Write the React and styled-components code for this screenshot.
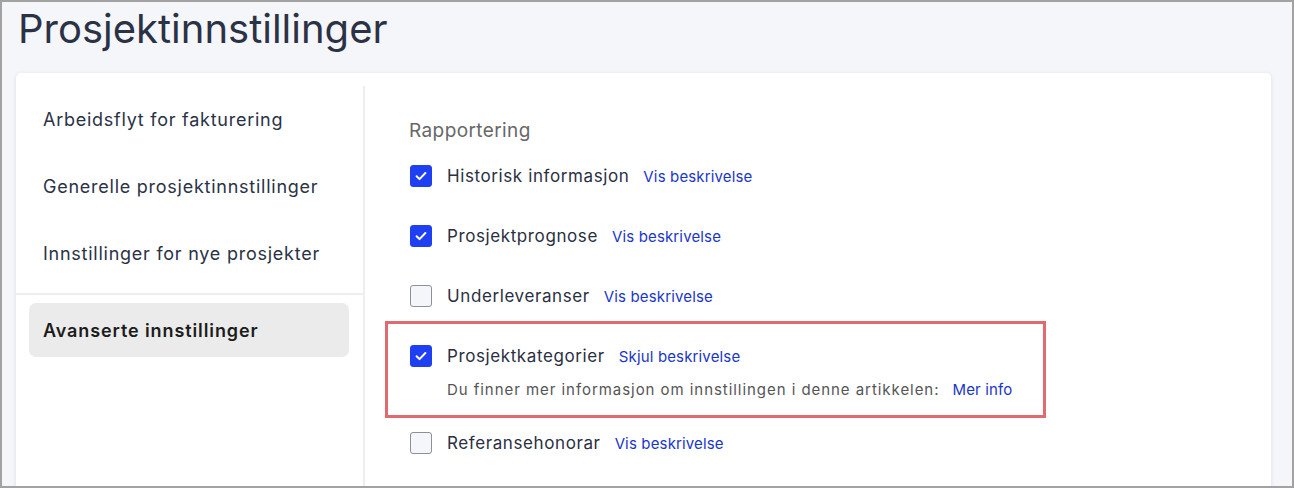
import React from "react";
import styled, { createGlobalStyle } from "styled-components";

const GlobalStyle = createGlobalStyle`
  html, body {
    margin: 0;
    padding: 0;
  }

  body {
    font-family: Inter, "Noto Sans", Roboto, sans-serif;
    background: #ffffff;
  }
`;

const navItems = [
  { label: "Arbeidsflyt for fakturering" },
  { label: "Generelle prosjektinnstillinger" },
  { label: "Innstillinger for nye prosjekter", divider: true },
  { label: "Avanserte innstillinger", active: true },
];

const settings = [
  { label: "Historisk informasjon", checked: true, link: "Vis beskrivelse" },
  { label: "Prosjektprognose", checked: true, link: "Vis beskrivelse" },
  { label: "Underleveranser", checked: false, link: "Vis beskrivelse" },
  {
    label: "Prosjektkategorier",
    checked: true,
    link: "Skjul beskrivelse",
    highlighted: true,
    description: "Du finner mer informasjon om innstillingen i denne artikkelen:",
  },
  { label: "Referansehonorar", checked: false, link: "Vis beskrivelse" },
];

const Checkbox = ({ checked }) => (
  <Box $checked={checked}>
    {checked && (
      <svg width="14" height="14" viewBox="0 0 14 14" fill="none">
        <path
          d="M2.6 7.3l2.9 2.8 5.9-6.1"
          stroke="#ffffff"
          strokeWidth="2"
          strokeLinecap="round"
          strokeLinejoin="round"
        />
      </svg>
    )}
  </Box>
);

const Setting = ({ setting }) => {
  const row = (
    <Row>
      <Checkbox checked={setting.checked} />
      <Label>{setting.label}</Label>
      <TextLink>{setting.link}</TextLink>
    </Row>
  );

  if (!setting.highlighted) return row;

  return (
    <Highlight>
      {row}
      <Description>
        {setting.description}
        <TextLink>Mer info</TextLink>
      </Description>
    </Highlight>
  );
};

const App = () => {
  return (
    <>
      <GlobalStyle />
      <Frame>
        <Title>Prosjektinnstillinger</Title>
        <Card>
          <Nav>
            {navItems.map((item) => (
              <React.Fragment key={item.label}>
                <NavItem $active={item.active}>{item.label}</NavItem>
                {item.divider && <Divider />}
              </React.Fragment>
            ))}
          </Nav>
          <Content>
            <SectionHeading>Rapportering</SectionHeading>
            <SettingList>
              {settings.map((setting) => (
                <Setting key={setting.label} setting={setting} />
              ))}
            </SettingList>
          </Content>
        </Card>
      </Frame>
    </>
  );
};

const Frame = styled.div`
  box-sizing: border-box;
  width: 1294px;
  height: 488px;
  border: 2px solid #a2a2a2;
  background: #f5f6fa;
  overflow: hidden;
  padding: 3px 21px 0 14px;
`;

const Title = styled.h1`
  margin: 0 0 20px 2px;
  font-size: 40px;
  line-height: 48px;
  font-weight: 400;
  color: #2b3245;
  letter-spacing: 0;
`;

const Card = styled.div`
  display: flex;
  background: #ffffff;
  border-radius: 5px;
  box-shadow: 0 1px 4px rgba(40, 45, 70, 0.12);
  min-height: 460px;
`;

const Nav = styled.nav`
  box-sizing: border-box;
  width: 349px;
  flex-shrink: 0;
  margin-top: 13px;
  padding: 6px 14px 0 13px;
  border-right: 2px solid #eeeeee;
  display: flex;
  flex-direction: column;
  gap: 13px;
`;

const NavItem = styled.div`
  height: 54px;
  display: flex;
  align-items: center;
  padding: 0 14px;
  border-radius: 7px;
  font-size: 18px;
  letter-spacing: ${(p) => (p.$active ? "0.9px" : "0.75px")};
  font-weight: ${(p) => (p.$active ? 600 : 400)};
  color: ${(p) => (p.$active ? "#1c1c1c" : "#2b3245")};
  background: ${(p) => (p.$active ? "#ebebeb" : "transparent")};
`;

const Divider = styled.div`
  height: 2px;
  background: #eeeeee;
  margin: 0 -14px -5px -13px;
`;

const Content = styled.div`
  flex: 1;
  padding: 46px 0 0 44px;
`;

const SectionHeading = styled.h2`
  margin: 0 0 21px;
  font-size: 19px;
  line-height: 24px;
  font-weight: 400;
  letter-spacing: 0.4px;
  color: #676767;
`;

const SettingList = styled.div`
  display: flex;
  flex-direction: column;
  align-items: flex-start;
  gap: 36px;
`;

const Row = styled.div`
  display: flex;
  align-items: center;
  height: 24px;
  margin-left: 1px;
`;

const Box = styled.span`
  box-sizing: border-box;
  width: 22px;
  height: 22px;
  border-radius: 3px;
  display: inline-flex;
  align-items: center;
  justify-content: center;
  margin-right: 15px;
  background: ${(p) => (p.$checked ? "#1f3ff2" : "#f5f6fa")};
  border: 1px solid ${(p) => (p.$checked ? "#1f3ff2" : "#8c909c")};
`;

const Label = styled.span`
  font-size: 17px;
  letter-spacing: 0.6px;
  color: #2a3042;
  margin-right: 14px;
`;

const TextLink = styled.a`
  font-size: 15px;
  letter-spacing: 0.15px;
  color: #1a36c9;
  cursor: pointer;
`;

const Highlight = styled.div`
  margin: -23px 0 -23px -24px;
  padding: 20px 31px 15px 21px;
  border: 3px solid #df6a70;
`;

const Description = styled.div`
  margin: 12px 0 0 38px;
  font-size: 15px;
  line-height: 20px;
  letter-spacing: 0.95px;
  color: #555555;

  ${TextLink} {
    margin-left: 13px;
    letter-spacing: 0.15px;
  }
`;

export default App;
